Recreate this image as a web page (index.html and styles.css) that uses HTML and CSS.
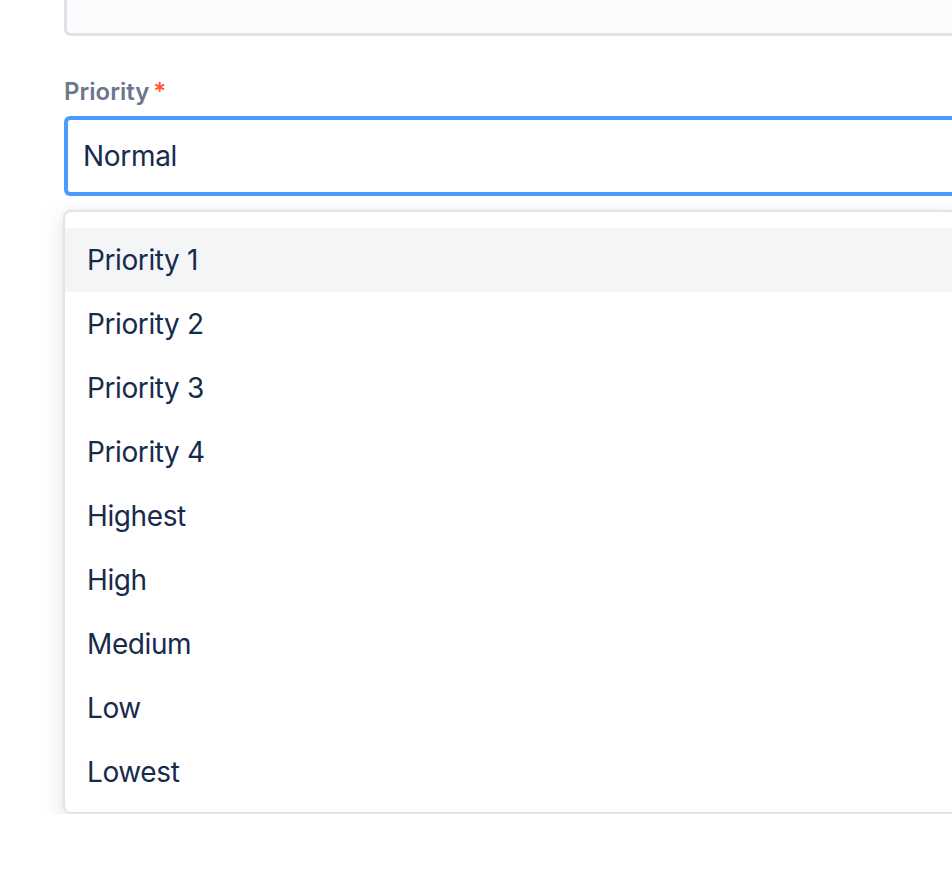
FILE: index.html
```html
<!DOCTYPE html>
<html lang="en">
<head>
<meta charset="utf-8">
<title>Priority</title>
<link rel="stylesheet" href="styles.css">
</head>
<body>
<div class="page">
  <div class="prev-field"></div>
  <div class="field">
    <label class="label">Priority<span class="req">*</span></label>
    <div class="select">Normal</div>
    <ul class="menu">
      <li class="opt active">Priority 1</li>
      <li class="opt">Priority 2</li>
      <li class="opt">Priority 3</li>
      <li class="opt">Priority 4</li>
      <li class="opt">Highest</li>
      <li class="opt">High</li>
      <li class="opt">Medium</li>
      <li class="opt">Low</li>
      <li class="opt">Lowest</li>
    </ul>
  </div>
</div>
</body>
</html>
```

FILE: styles.css
```css
html, body {
  margin: 0;
  padding: 0;
  background: #ffffff;
  overflow: hidden;
}
body {
  font-family: Inter, "Noto Sans", "Liberation Sans", sans-serif;
  color: #172B4D;
}
.page {
  padding-left: 64px;
}
.prev-field {
  height: 33px;
  background: #FAFBFC;
  border: 3px solid #DFE1E6;
  border-top: none;
  border-right: none;
  border-radius: 0 0 0 7px;
}
.field {
  display: flex;
  flex-direction: column;
  padding-top: 40px;
}
.label {
  font-size: 24px;
  line-height: 32px;
  font-weight: 600;
  color: #6B778C;
  margin-bottom: 8px;
}
.req {
  color: #FF5630;
  margin-left: 4px;
}
.select {
  box-sizing: border-box;
  height: 80px;
  border: 4px solid #4C9AFF;
  border-right: none;
  border-radius: 6px 0 0 6px;
  display: flex;
  align-items: center;
  padding: 0 15px;
  font-size: 28px;
  letter-spacing: -0.3px;
  color: #172B4D;
}
.menu {
  list-style: none;
  margin: 14px 0 0 -1px;
  padding: 16px 0 8px;
  border: 2px solid #E4E4E6;
  border-right: none;
  border-radius: 8px 0 0 8px;
  box-shadow: 0 8px 24px rgba(9, 30, 66, 0.11), 0 0 6px rgba(9, 30, 66, 0.06);
}
.opt {
  height: 64px;
  display: flex;
  align-items: center;
  padding-left: 22px;
  font-size: 28px;
  letter-spacing: -0.4px;
  color: #172B4D;
}
.opt.active {
  background: #F4F5F7;
}
```
